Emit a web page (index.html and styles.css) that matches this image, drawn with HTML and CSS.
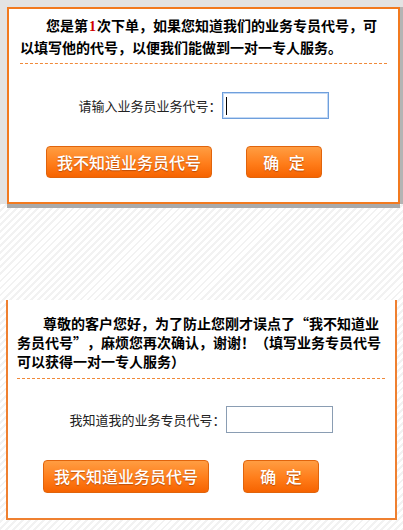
FILE: index.html
```html
<!DOCTYPE html>
<html lang="zh-CN">
<head>
<meta charset="utf-8">
<title>业务专员代号</title>
<link rel="stylesheet" href="styles.css">
</head>
<body>
<div class="overlay">
  <div class="dialog dialog-first">
    <p class="notice notice-first">您是第<span class="count">1</span>次下单，如果您知道我们的业务专员代号，可以填写他的代号，以便我们能做到一对一专人服务。</p>
    <div class="field field-first">
      <label class="field-label" for="code1">请输入业务员业务代号：</label>
      <span class="input-wrap"><input id="code1" class="code-input code-input-focus" type="text"><span class="caret"></span></span>
    </div>
    <div class="actions actions-first">
      <button class="btn btn-wide" type="button">我不知道业务员代号</button>
      <button class="btn btn-ok" type="button">确 定</button>
    </div>
  </div>
</div>

<div class="dialog dialog-second">
  <p class="notice notice-second">尊敬的客户您好，为了防止您刚才误点了“我不知道业务员代号”，麻烦您再次确认，谢谢！（填写业务专员代号可以获得一对一专人服务）</p>
  <div class="field field-second">
    <label class="field-label" for="code2">我知道我的业务专员代号：</label>
    <span class="input-wrap"><input id="code2" class="code-input" type="text"></span>
  </div>
  <div class="actions actions-second">
    <button class="btn btn-wide btn-tall" type="button">我不知道业务员代号</button>
    <button class="btn btn-ok btn-tall" type="button">确 定</button>
  </div>
</div>
</body>
</html>
```
FILE: styles.css
```css
html, body {
  margin: 0;
  padding: 0;
}

body {
  width: 403px;
  height: 530px;
  overflow: hidden;
  font-family: "Noto Sans CJK SC", "Liberation Sans", sans-serif;
  color: #000;
  background: repeating-linear-gradient(135deg, #ffffff 0 3px, #f2f2f2 3px 5px);
  text-spacing-trim: space-all;
}

.overlay {
  height: 204px;
  box-sizing: border-box;
  padding: 7px 0 0 7px;
  background: #e3e3e3;
}

.dialog {
  background: #fff;
  box-sizing: border-box;
}

.dialog-first {
  width: 393px;
  height: 197px;
  border: 2px solid #f27a1f;
  padding: 6px 11px 0 11px;
  box-shadow: 3px 0 0 #b4b4b4, 0 4px 0 #a9a9a9;
}

.dialog-second {
  width: 391px;
  height: 220px;
  margin: 96px 0 0 6px;
  border: 2px solid #ef8030;
  border-top: none;
  padding: 14px 10px 0 9px;
}

.notice {
  margin: 0;
  font-weight: 700;
  font-size: 14px;
  text-indent: 26px;
  border-bottom: 1px dashed #f0893a;
}

.notice-first {
  line-height: 20px;
  padding: 0 6px 6px 0;
}

.notice-second {
  line-height: 19px;
  padding: 0 2px 7px 0;
}

.count {
  margin: 0 1px;
  color: #d10000;
  font-family: "Liberation Serif", serif;
  font-weight: 700;
}

.field {
  display: flex;
  justify-content: center;
  align-items: center;
  height: 27px;
}

.field-first {
  margin-top: 28px;
}

.field-second {
  margin-top: 27px;
}

.field-label {
  font-size: 13px;
  line-height: 27px;
  color: #222;
}

.input-wrap {
  position: relative;
  display: block;
  width: 107px;
  height: 27px;
}

.code-input {
  display: block;
  width: 107px;
  height: 27px;
  box-sizing: border-box;
  margin: 0;
  padding: 0 4px;
  border: 1px solid #8a9db3;
  background: #fff;
  font-size: 13px;
  outline: none;
}

.code-input-focus {
  border-color: #6f9fdc;
  box-shadow: inset 0 0 0 1px #c3d9f5;
}

.caret {
  position: absolute;
  left: 4px;
  top: 5px;
  width: 1px;
  height: 18px;
  background: #000;
}

.actions {
  display: flex;
  gap: 34px;
  padding-left: 26px;
  margin-top: 27px;
}

.btn {
  height: 32px;
  box-sizing: border-box;
  margin: 0;
  padding: 0;
  border: 1px solid #e0640c;
  border-radius: 4px;
  background: linear-gradient(#ff9d42, #ff7d1a 55%, #f66300);
  color: #fff;
  font-family: "Noto Sans CJK SC", "Liberation Sans", sans-serif;
  font-size: 16px;
  font-weight: 500;
  line-height: 30px;
  text-shadow: 0 1px 1px rgba(140, 50, 0, 0.55);
}

.btn-tall {
  height: 33px;
  line-height: 31px;
}

.btn-wide {
  width: 166px;
}

.btn-ok {
  width: 76px;
  word-spacing: 6px;
}
```
